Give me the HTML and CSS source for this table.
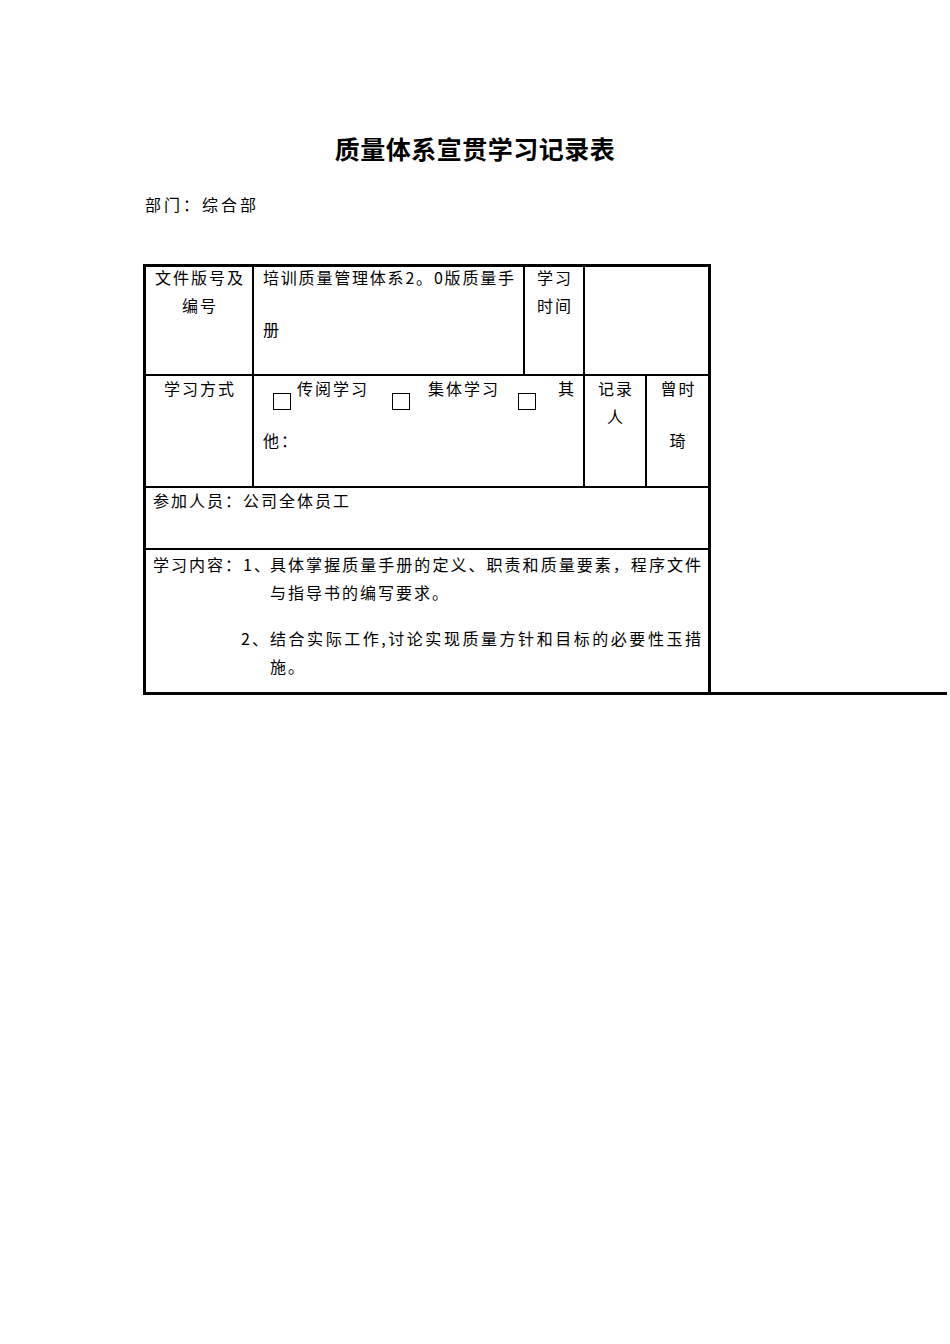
FILE: index.html
```html
<!DOCTYPE html>
<html lang="zh-CN">
<head>
<meta charset="utf-8">
<title>质量体系宣贯学习记录表</title>
<link rel="stylesheet" href="styles.css">
</head>
<body>
<main class="page">
  <h1 class="title">质量体系宣贯学习记录表</h1>
  <div class="sheet">
    <p class="dept">部门：综合部</p>
    <div class="form-wrap">
      <div class="form">
        <div class="cell center r1"><div class="txt">文件版号及<br>编号</div></div>
        <div class="cell r1"><div class="txt"><span class="jline">培训质量管理体系2。0版质量手</span><span class="line gap-lg">册</span></div></div>
        <div class="cell center r1"><div class="txt">学习<br>时间</div></div>
        <div class="cell span2"></div>

        <div class="cell center r2"><div class="txt">学习方式</div></div>
        <div class="cell span2 r2">
          <div class="txt">
            <div class="opts">
              <span class="box b1"></span><span class="opt o1">传阅学习</span>
              <span class="box b2"></span><span class="opt o2">集体学习</span>
              <span class="box b3"></span><span class="opt o3">其</span>
            </div>
            <span class="line gap-lg">他：</span>
          </div>
        </div>
        <div class="cell center r2"><div class="txt">记录<br>人</div></div>
        <div class="cell center r2"><div class="txt">曾时<span class="line gap-lg">琦</span></div></div>

        <div class="cell span5 pad7 r3"><div class="txt">参加人员：公司全体员工</div></div>

        <div class="cell span5 pad7 r4">
          <div class="txt study">
            <span class="label">学习内容：</span>
            <div class="items">
              <div class="item">
                <span class="marker">1、</span>
                <div class="itext"><span class="jline">具体掌握质量手册的定义、职责和质量要素，程序文件</span><span class="line">与指导书的编写要求。</span></div>
              </div>
              <div class="item item2">
                <span class="marker m2">2、</span>
                <div class="itext"><span class="jline">结合实际工作,讨论实现质量方针和目标的必要性玉措</span><span class="line">施。</span></div>
              </div>
            </div>
          </div>
        </div>
      </div>
    </div>
  </div>
</main>
</body>
</html>
```

FILE: styles.css
```css
* {
  box-sizing: border-box;
  margin: 0;
  padding: 0;
}

body {
  background: #fff;
  color: #000;
  font-family: "Noto Sans CJK SC", "Liberation Serif", sans-serif;
  font-size: 16px;
}

.page {
  width: 950px;
  min-height: 1344px;
  padding-top: 130px;
}

.title {
  font-size: 25px;
  font-weight: 700;
  line-height: 36px;
  text-align: center;
  letter-spacing: 0.5px;
}

.sheet {
  margin-left: 143px;
  width: 568px;
}

.dept {
  margin-top: 24px;
  margin-left: 2px;
  line-height: 28px;
  letter-spacing: 3px;
}

.form-wrap {
  position: relative;
  margin-top: 46px;
}

.form-wrap::after {
  content: "";
  position: absolute;
  left: 100%;
  bottom: 0;
  width: 236px;
  height: 3px;
  background: #000;
}

.form {
  display: grid;
  grid-template-columns: 106px 269px 58px 60px 61px;
  grid-template-rows: 107px 110px 60px 142px;
  gap: 2px;
  background: #000;
  border: 3px solid #000;
}

.cell {
  background: #fff;
  padding: 0 9px;
  line-height: 28px;
  letter-spacing: 2px;
  white-space: nowrap;
}

.cell.center {
  text-align: center;
  padding: 0 2px 0 4px;
}

.span2 { grid-column: span 2; }
.span5 { grid-column: span 5; }
.pad7 { padding: 0 7px; }

.r1 .txt { margin-top: -4px; }
.r2 .txt { margin-top: -2px; }
.r3 .txt { margin-top: -2px; }
.r4 .txt { margin-top: 0; }

.line {
  display: block;
}

.gap-lg {
  margin-top: 24px;
}

.jline {
  display: block;
  text-align: justify;
  text-align-last: justify;
  letter-spacing: 0;
  white-space: normal;
}

/* study method options */
.opts {
  display: flex;
  align-items: flex-start;
  height: 28px;
}

.box {
  flex: none;
  width: 18px;
  height: 17px;
  margin-top: 19px;
  border: 1.5px solid #000;
}

.b1 { margin-left: 10px; }
.o1 { margin-left: 6px; }
.b2 { margin-left: 23px; }
.o2 { margin-left: 18px; }
.b3 { margin-left: 18px; }
.o3 { margin-left: 22px; }

/* study content */
.study {
  display: flex;
}

.label {
  flex: none;
  width: 90px;
}

.items {
  flex: 1;
  min-width: 0;
}

.item {
  display: flex;
}

.item2 {
  margin-top: 18px;
}

.marker {
  flex: none;
  width: 27px;
}

.m2 {
  margin-left: -2px;
  width: 29px;
}

.itext {
  flex: 1;
  min-width: 0;
}
```
